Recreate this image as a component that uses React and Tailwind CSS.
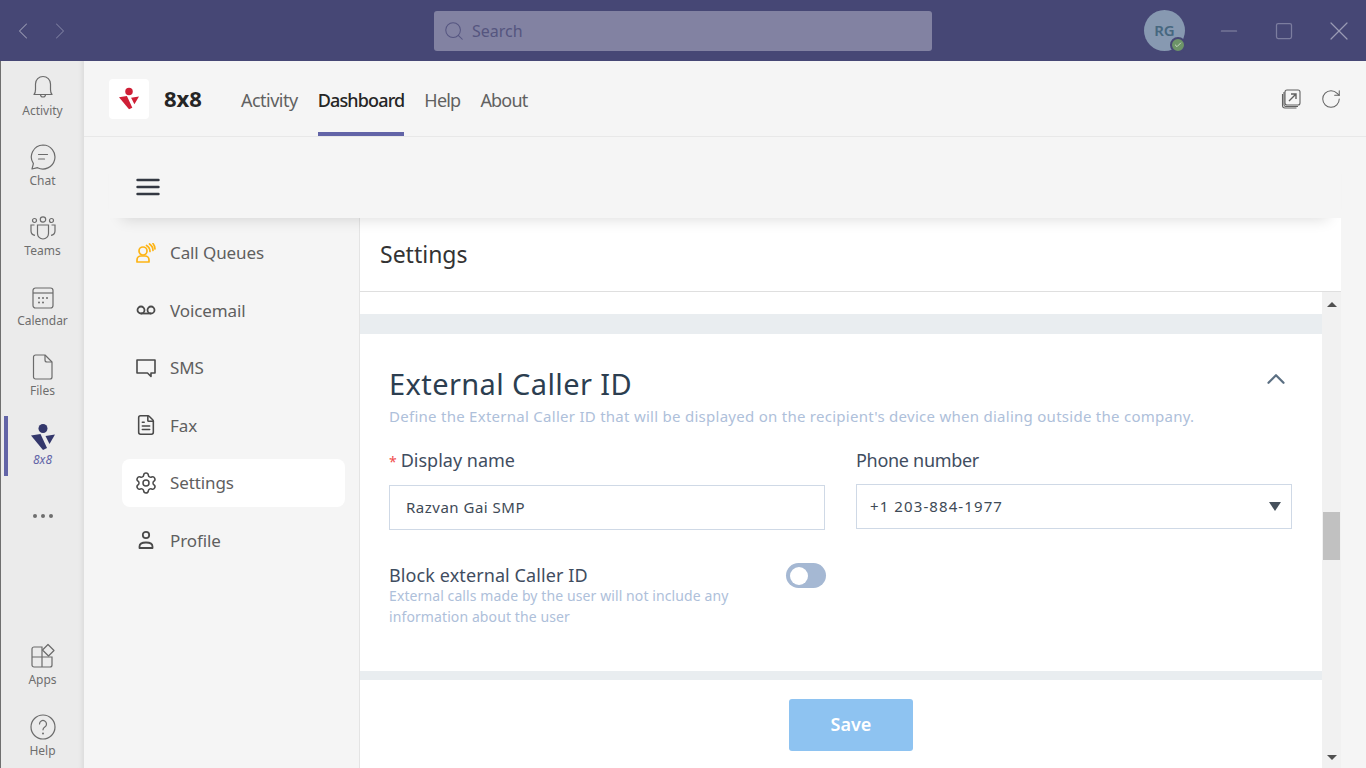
import { ChevronLeft, ChevronRight, Search, Minus, Square, X, ChevronUp, Check, RotateCw, Settings, FileText } from "lucide-react";

const Logo = ({ color, className = "" }) => (
  <svg viewBox="0 0 24 26" className={className}>
    <circle cx="12" cy="4.5" r="4.5" fill={color} />
    <path d="M0 11.5 L9.5 10 L16 24 L12 26 Z" fill={color} />
    <path d="M14.5 12 L24 10.5 L18.5 20 Z" fill={color} />
  </svg>
);

const railIcons = {
  Activity: (
    <svg viewBox="0 0 24 26" className="h-[26px] w-[24px]" fill="none" stroke="#6b6b6b" strokeWidth="1.2">
      <path d="M3 20.5c1-1 1.5-2.5 1.5-5V10a7.5 7.5 0 0 1 15 0v5.5c0 2.5.5 4 1.5 5z" strokeLinejoin="round" />
      <path d="M9.5 20.5a2.5 2.5 0 0 0 5 0" />
    </svg>
  ),
  Chat: (
    <svg viewBox="0 0 26 26" className="h-[26px] w-[26px]" fill="none" stroke="#6b6b6b" strokeWidth="1.2">
      <path d="M13 1a12 12 0 1 1-5.5 22.7L2 25l1.4-5.3A12 12 0 0 1 13 1z" strokeLinejoin="round" />
      <path d="M8.5 10.5h9M8.5 15h6" strokeLinecap="round" />
    </svg>
  ),
  Teams: (
    <svg viewBox="0 0 28 24" className="h-[24px] w-[28px]" fill="none" stroke="#6b6b6b" strokeWidth="1.2">
      <circle cx="14" cy="3.5" r="2.7" />
      <circle cx="5.5" cy="4.5" r="2" />
      <circle cx="22.5" cy="4.5" r="2" />
      <path d="M8.5 9h11v8.5a5.5 5.5 0 0 1-11 0z" />
      <path d="M5.5 9H2v6a4.5 4.5 0 0 0 4 4.3M22.5 9H26v6a4.5 4.5 0 0 1-4 4.3" />
    </svg>
  ),
  Calendar: (
    <svg viewBox="0 0 24 24" className="h-[24px] w-[24px]" fill="none" stroke="#6b6b6b" strokeWidth="1.2">
      <rect x="2" y="2" width="20" height="20" rx="2.5" />
      <path d="M2 7h20" />
      <g fill="#6b6b6b" stroke="none">
        <circle cx="8" cy="12" r="1" /><circle cx="12" cy="12" r="1" /><circle cx="16" cy="12" r="1" />
        <circle cx="8" cy="16.5" r="1" /><circle cx="12" cy="16.5" r="1" />
      </g>
    </svg>
  ),
  Files: (
    <svg viewBox="0 0 22 26" className="h-[26px] w-[22px]" fill="none" stroke="#6b6b6b" strokeWidth="1.2">
      <path d="M3.5 1H13l7 7v15a2 2 0 0 1-2 2H3.5a2 2 0 0 1-2-2V3a2 2 0 0 1 2-2z" strokeLinejoin="round" />
      <path d="M13 1v5a2 2 0 0 0 2 2h5" />
    </svg>
  ),
  Apps: (
    <svg viewBox="0 0 26 26" className="h-[26px] w-[26px]" fill="none" stroke="#6b6b6b" strokeWidth="1.2">
      <path d="M2 14h10v10H4a2 2 0 0 1-2-2zM12 14h10v8a2 2 0 0 1-2 2h-8zM2 14V6a2 2 0 0 1 2-2h8v10" />
      <path d="M18 1.5l6 6-5.5 5.5-6-6z" strokeLinejoin="round" />
    </svg>
  ),
  Help: (
    <svg viewBox="0 0 26 26" className="h-[26px] w-[26px]" fill="none" stroke="#6b6b6b" strokeWidth="1.2">
      <circle cx="13" cy="13" r="12" />
      <path d="M9.5 10a3.5 3.5 0 1 1 5.3 3c-1.2.8-1.8 1.4-1.8 2.8" strokeLinecap="round" />
      <circle cx="13" cy="19.5" r="1" fill="#6b6b6b" stroke="none" />
    </svg>
  ),
};

const RailItem = ({ label, className = "" }) => (
  <div className={`flex h-[70px] shrink-0 flex-col items-center ${className}`}>
    <div className="flex h-[40px] items-end justify-center pb-[1px]">{railIcons[label]}</div>
    <span className="mt-[2px] text-[12px] leading-[16px] text-[#6e6e6e]">{label}</span>
  </div>
);

const Rail = () => (
  <div className="flex w-[84px] shrink-0 flex-col border-l border-l-[#6f6f6f] bg-[#ebebeb] shadow-[inset_-6px_0_6px_-6px_rgba(0,0,0,0.12)]">
    <RailItem label="Activity" />
    <RailItem label="Chat" />
    <RailItem label="Teams" />
    <RailItem label="Calendar" />
    <RailItem label="Files" />
    <div className="relative flex h-[70px] shrink-0 flex-col items-center">
      <div className="absolute left-[3px] top-[5px] h-[60px] w-[4px] bg-[#6264a7]" />
      <Logo color="#33376b" className="mt-[13px] h-[26px] w-[24px]" />
      <span className="mt-[2px] text-[12px] italic leading-[16px] text-[#6264a7]">8x8</span>
    </div>
    <div className="flex h-[70px] shrink-0 items-center justify-center gap-[4px]">
      <span className="size-[4px] rounded-full bg-[#6e6e6e]" />
      <span className="size-[4px] rounded-full bg-[#6e6e6e]" />
      <span className="size-[4px] rounded-full bg-[#6e6e6e]" />
    </div>
    <RailItem label="Apps" className="mt-auto" />
    <RailItem label="Help" className="mt-[1px] mb-[-3px]" />
  </div>
);

const TitleBar = () => (
  <div className="flex h-[61px] shrink-0 items-center bg-[#464775] pl-[9px]">
    <ChevronLeft size={28} strokeWidth={0.9} className="text-[#9a9bb4]" />
    <ChevronRight size={28} strokeWidth={0.9} className="ml-[9px] text-[#7c7d9f]" />
    <div className="ml-[360px] flex h-[40px] w-[498px] items-center gap-[7px] rounded-[3px] bg-[#8282a2] pl-[9px]">
      <Search size={22} strokeWidth={1.1} className="text-[#555580]" />
      <span className="text-[16px] text-[#55557f]">Search</span>
    </div>
    <div className="relative ml-[212px] flex size-[41px] items-center justify-center rounded-full bg-[#8799b1] text-[15px] font-semibold text-[#46677f]">
      RG
      <div className="absolute -bottom-[2px] -right-[1px] flex size-[16px] items-center justify-center rounded-full border-2 border-[#464775] bg-[#6d9468]">
        <Check size={8} strokeWidth={3} className="text-[#c9d8c6]" />
      </div>
    </div>
    <Minus size={26} strokeWidth={1.1} className="ml-[31px] text-[#8a8ba8]" />
    <Square size={20} strokeWidth={1.5} className="ml-[32px] text-[#7c7d9f]" />
    <X size={32} strokeWidth={0.9} className="ml-[29px] text-[#9a9bb4]" />
  </div>
);

const AppHeader = () => (
  <div className="flex h-[76px] shrink-0 items-center border-b border-[#e8e8e8] pl-[25px] pr-[24px]">
    <div className="flex size-[40px] items-center justify-center rounded-[4px] bg-white">
      <Logo color="#cf1f36" className="h-[23px] w-[20px]" />
    </div>
    <span className="ml-[15px] text-[22px] font-bold text-[#252525]">8x8</span>
    <nav className="ml-[39px] flex h-full items-stretch gap-[20px] text-[18px] tracking-[-0.5px]">
      <span className="flex items-center pt-[3px] text-[#616161]">Activity</span>
      <span className="flex items-center border-b-[4px] border-[#6264a7] pt-[7px] font-medium tracking-[-0.85px] text-[#252525]">Dashboard</span>
      <span className="flex items-center pt-[3px] tracking-[-0.8px] text-[#616161]">Help</span>
      <span className="flex items-center pt-[3px] tracking-[-0.8px] text-[#616161]">About</span>
    </nav>
    <div className="ml-auto flex items-center gap-[18px] text-[#616161]">
      <svg viewBox="0 0 22 22" className="size-[22px]" fill="none" stroke="currentColor" strokeWidth="1.1">
        <rect x="5" y="2" width="15" height="15" rx="2" />
        <path d="M2.5 6v11.5a2.5 2.5 0 0 0 2.5 2.5h11.5M4 4v13a2 2 0 0 0 1.5 1.5H18" />
        <path d="M9 13l7-7M11 6h5v5" strokeWidth="1.4" />
      </svg>
      <RotateCw size={22} strokeWidth={1.1} />
    </div>
  </div>
);

const CallQueuesIcon = () => (
  <svg viewBox="0 0 20 20" className="size-[20px]" fill="none" stroke="#fdb415" strokeWidth="1.7">
    <circle cx="7" cy="8" r="4" />
    <path d="M1 19v-2a4 4 0 0 1 4-4h4a4 4 0 0 1 4 4v2z" strokeLinejoin="round" />
    <path d="M10.5 2.5a7 7 0 0 1 3.5 6M13.5 1a8 8 0 0 1 3.5 6.5M17 .5a9 9 0 0 1 2 5.5" strokeLinecap="round" />
  </svg>
);

const navItems = [
  { label: "Call Queues", icon: <CallQueuesIcon /> },
  {
    label: "Voicemail",
    icon: (
      <svg viewBox="0 0 20 20" className="size-[20px]" fill="none" stroke="#4a4a4a" strokeWidth="1.8">
        <circle cx="5" cy="10" r="3.5" /><circle cx="15" cy="10" r="3.5" /><path d="M5 13.5h10" />
      </svg>
    ),
  },
  {
    label: "SMS",
    icon: (
      <svg viewBox="0 0 20 20" className="size-[20px]" fill="none" stroke="#4a4a4a" strokeWidth="1.6">
        <path d="M1 2h18v13h-4v3.5L11.5 15H1z" strokeLinejoin="round" />
      </svg>
    ),
  },
  { label: "Fax", icon: <FileText size={22} strokeWidth={1.7} className="mx-[-1px] text-[#4a4a4a]" /> },
  { label: "Settings", active: true, icon: <Settings size={24} strokeWidth={1.5} className="mx-[-2px] text-[#4a4a4a]" /> },
  {
    label: "Profile",
    icon: (
      <svg viewBox="0 0 20 20" className="size-[20px]" fill="none" stroke="#4a4a4a" strokeWidth="1.8">
        <circle cx="10" cy="5" r="3.2" />
        <path d="M3.5 18v-1.5c0-2.5 2-4 6.5-4s6.5 1.5 6.5 4V18z" strokeLinejoin="round" />
      </svg>
    ),
  },
];

const Sidebar = () => (
  <div className="flex w-[251px] shrink-0 flex-col border-r border-[#e4e4e4] pl-[13px] pr-[14px] pt-[11px]">
    {navItems.map((item) => (
      <div
        key={item.label}
        className={`mb-[10px] flex h-[47.5px] items-center gap-[14px] rounded-[8px] pl-[14px] text-[17px] tracking-[-0.1px] text-[#5f5f5f] ${item.active ? "bg-white" : ""}`}
      >
        {item.icon}
        <span>{item.label}</span>
      </div>
    ))}
  </div>
);

const Label = ({ children, className = "" }) => <div className={`text-[18px] leading-[24px] text-[#3f4d5f] ${className}`}>{children}</div>;

const CallerCard = () => (
  <div className="h-[337px] bg-white pl-[29px] pr-[30px] pt-[30px]">
    <div className="flex items-start justify-between pr-[1px]">
      <h2 className="text-[29px] font-normal leading-[40px] tracking-[0.4px] text-[#2c3e50]">External Caller ID</h2>
      <ChevronUp size={30} strokeWidth={1.8} className="text-[#5b6f82]" />
    </div>
    <p className="mt-[2px] text-[15px] leading-[20px] tracking-[0.27px] text-[#aec0da]">
      Define the External Caller ID that will be displayed on the recipient's device when dialing outside the company.
    </p>
    <div className="mt-[22px] grid grid-cols-[436px_436px] gap-x-[31px]">
      <div>
        <Label><span className="mr-[4px] text-[14px] text-[#f04d4d]">*</span>Display name</Label>
        <div className="mt-[11px] flex h-[45px] items-center border border-[#cfd9e6] pl-[16px] text-[15px] tracking-[0.5px] text-[#3e4a56]">Razvan Gai SMP</div>
      </div>
      <div>
        <Label className="tracking-[-0.3px]">Phone number</Label>
        <div className="mt-[12px] flex h-[45px] items-center justify-between border border-[#cfd9e6] pl-[13px] pr-[10px] text-[15px] tracking-[1.1px] text-[#3e4a56]">
          +1 203-884-1977
          <span className="h-0 w-0 border-x-[6px] border-t-[9px] border-x-transparent border-t-[#46515c]" />
        </div>
      </div>
    </div>
    <div className="mt-[33px] flex w-[437px] items-start justify-between">
      <div>
        <Label className="tracking-[0.1px]">Block external Caller ID</Label>
        <p className="mt-[-2px] w-[380px] text-[14px] leading-[21px] tracking-[0.1px] text-[#aec0da]">External calls made by the user will not include any information about the user</p>
      </div>
      <div className="flex h-[25px] w-[40px] items-center rounded-full bg-[#a5b8d3] pl-[4px]">
        <span className="size-[18px] rounded-full bg-white" />
      </div>
    </div>
  </div>
);

const Scrollbar = () => (
  <div className="flex w-[19px] shrink-0 flex-col items-center bg-[#f1f1f1]">
    <span className="mt-[10px] h-0 w-0 border-x-[5px] border-b-[5px] border-x-transparent border-b-[#505050]" />
    <div className="mt-[205px] h-[48px] w-[17px] bg-[#c1c1c1]" />
    <span className="mt-auto mb-[8px] h-0 w-0 border-x-[5px] border-t-[5px] border-x-transparent border-t-[#505050]" />
  </div>
);

const Content = () => (
  <div className="flex w-[981px] shrink-0 flex-col bg-white">
    <div className="flex h-[74px] shrink-0 items-center border-b border-[#dfdfdf] pl-[20px] text-[23px] text-[#333333]">Settings</div>
    <div className="flex min-h-0 flex-1">
      <div className="flex-1">
        <div className="h-[22px]" />
        <div className="h-[20px] bg-[#e9edf0]" />
        <CallerCard />
        <div className="h-[9px] bg-[#e9edf0]" />
        <div className="pl-[429px] pt-[19px]">
          <button className="h-[52px] w-[124px] rounded-[3px] bg-[#8ec3f1] pb-[2px] text-[18px] font-semibold text-white">Save</button>
        </div>
      </div>
      <Scrollbar />
    </div>
  </div>
);

export default function App() {
  return (
    <div className="flex h-[768px] w-[1366px] flex-col overflow-hidden bg-[#f5f5f5] font-['Noto_Sans',sans-serif]">
      <TitleBar />
      <div className="flex min-h-0 flex-1">
        <Rail />
        <div className="flex min-w-0 flex-1 flex-col">
          <AppHeader />
          <div className="ml-[25px] flex min-h-0 w-[1232px] flex-1 flex-col">
            <div className="relative z-10 flex h-[81px] shrink-0 items-center bg-[#f5f5f5] pl-[27px] pt-[19px] shadow-[0_14px_14px_-13px_rgba(0,0,0,0.14)]">
              <svg viewBox="0 0 24 18" className="h-[18px] w-[24px]" stroke="#333842" strokeWidth="2.4" strokeLinecap="round">
                <path d="M1.5 2h21M1.5 9h21M1.5 16h21" />
              </svg>
            </div>
            <div className="flex min-h-0 flex-1">
              <Sidebar />
              <Content />
            </div>
          </div>
        </div>
      </div>
    </div>
  );
}
